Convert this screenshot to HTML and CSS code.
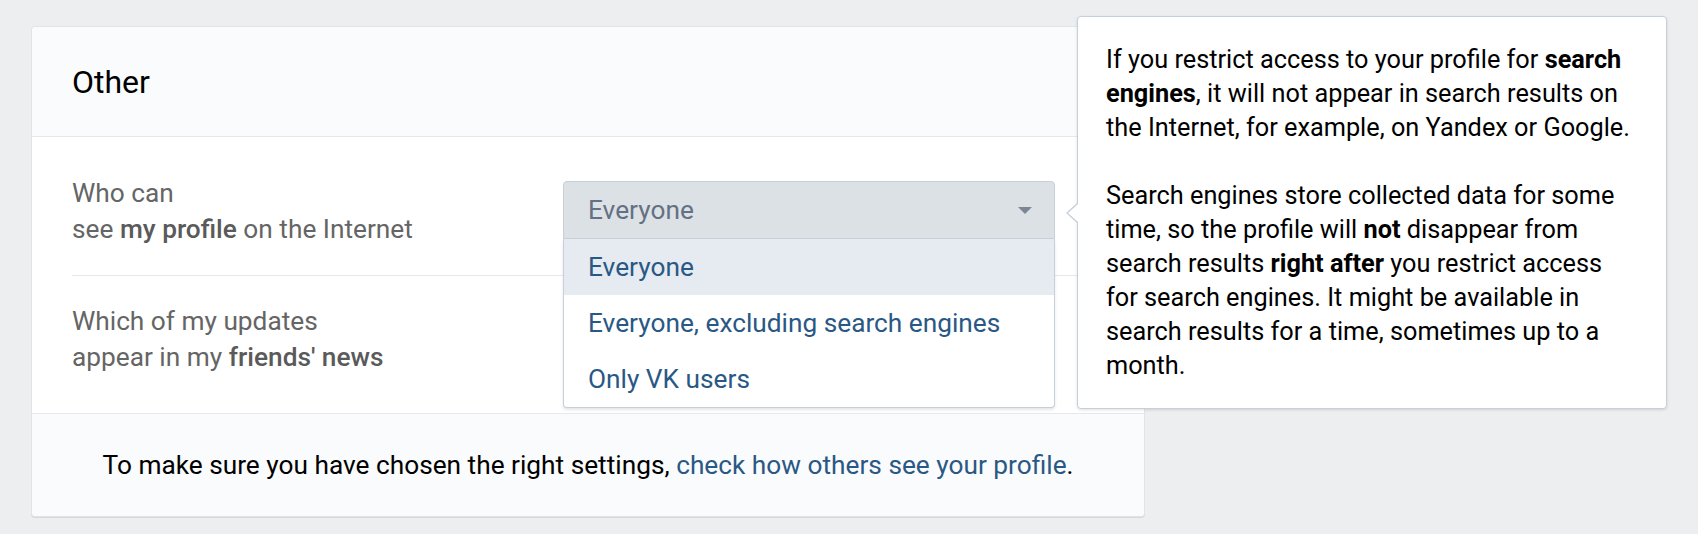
FILE: index.html
```html
<!DOCTYPE html>
<html lang="en">
<head>
<meta charset="utf-8">
<title>Other settings</title>
<link rel="stylesheet" href="styles.css">
</head>
<body>
<div class="page">
  <section class="card">
    <header class="card-header">
      <h2 class="card-title">Other</h2>
    </header>
    <div class="card-body">
      <div class="row">
        <div class="row-label">Who can<br>see <b>my profile</b> on the Internet</div>
        <div class="select is-open">
          <div class="select-head">
            <span class="select-value">Everyone</span>
            <span class="select-arrow"></span>
          </div>
          <ul class="select-list">
            <li class="select-option is-hover">Everyone</li>
            <li class="select-option">Everyone, excluding search engines</li>
            <li class="select-option">Only VK users</li>
          </ul>
        </div>
      </div>
      <div class="row row-sep">
        <div class="row-label">Which of my updates<br>appear in my <b>friends' news</b></div>
      </div>
    </div>
    <footer class="card-footer">
      To make sure you have chosen the right settings, <a class="link" href="#">check how others see your profile</a>.
    </footer>
  </section>

  <div class="tooltip">
    <span class="tooltip-pointer"></span>
    <p>If you restrict access to your profile for <b>search<br>engines</b>, it will not appear in search results on<br>the Internet, for example, on Yandex or Google.</p>
    <p class="tooltip-p2">Search engines store collected data for some<br>time, so the profile will <b>not</b> disappear from<br>search results <b>right after</b> you restrict access<br>for search engines. It might be available in<br>search results for a time, sometimes up to a<br>month.</p>
  </div>
</div>
</body>
</html>
```

FILE: styles.css
```css
* { box-sizing: border-box; }

html, body {
  margin: 0;
  padding: 0;
  background: #edeef0;
  font-family: Roboto, "Liberation Sans", Arial, sans-serif;
  color: #000;
}

.page {
  position: relative;
  width: 1698px;
  height: 534px;
  padding: 26px 0 0 31px;
}

.card {
  width: 1114px;
  background: #fff;
  border: 1px solid #e1e3e6;
  border-radius: 4px;
  box-shadow: 0 1px 0 0 #d7d8db;
  overflow: visible;
}

.card-header {
  height: 110px;
  display: flex;
  align-items: center;
  padding: 0 40px;
  background: #fafbfc;
  border-bottom: 1px solid #e7e8ec;
  border-radius: 4px 4px 0 0;
}

.card-title {
  margin: 0;
  font-size: 32px;
  font-weight: 400;
  line-height: 36px;
  color: #000;
}

.card-body {
  padding: 10px 0 10px;
}

.row {
  display: flex;
  align-items: center;
  margin: 0 40px;
  padding: 28px 0;
}

.row-sep {
  border-top: 1px solid #e7e8ec;
  padding-top: 27px;
}

.row-label {
  width: 491px;
  flex: none;
  font-size: 26.25px;
  line-height: 36px;
  color: #656565;
}

.row-label b {
  font-weight: 500;
  color: #5a5a5a;
}

.select {
  position: relative;
  width: 492px;
  flex: none;
  margin-bottom: 3px;
  font-size: 26.25px;
  line-height: 36px;
  z-index: 2;
}

.select-head {
  position: relative;
  padding: 10px 60px 10px 24px;
  background: #dce1e6;
  border: 1px solid #c5d0db;
  border-radius: 4px 4px 0 0;
  color: #647182;
}

.select-arrow {
  position: absolute;
  right: 22px;
  top: 25px;
  width: 0;
  height: 0;
  border-left: 7.5px solid transparent;
  border-right: 7.5px solid transparent;
  border-top: 7px solid #7b8796;
}

.select-list {
  position: absolute;
  top: 100%;
  left: 0;
  right: 0;
  margin: 0;
  padding: 0;
  list-style: none;
  background: #fff;
  border: 1px solid #c5d0db;
  border-top: 0;
  border-radius: 0 0 4px 4px;
  box-shadow: 0 2px 3px rgba(0, 0, 0, 0.1);
}

.select-option {
  padding: 10px 24px 10.3px;
  color: #2a5885;
}

.select-option.is-hover {
  background: #e5ebf1;
}

.card-footer {
  padding: 33px 20px 33px;
  background: #fafbfc;
  border-top: 1px solid #e7e8ec;
  border-radius: 0 0 4px 4px;
  text-align: center;
  font-size: 26.25px;
  line-height: 36px;
  color: #000;
}

.link {
  color: #2a5885;
  text-decoration: none;
}

.tooltip {
  position: absolute;
  left: 1077px;
  top: 16px;
  width: 590px;
  padding: 26px 20px 25px 28px;
  background: #fff;
  border: 1px solid #c5d0db;
  border-radius: 4px;
  box-shadow: 0 1px 3px rgba(0, 0, 0, 0.12);
  font-size: 25.3px;
  line-height: 34px;
  color: #000;
  white-space: nowrap;
  z-index: 3;
}

.tooltip p {
  margin: 0;
}

.tooltip .tooltip-p2 {
  margin-top: 34px;
}

.tooltip b {
  font-weight: 700;
}

.tooltip-pointer {
  position: absolute;
  left: -12px;
  top: 186px;
  width: 0;
  height: 0;
  border-top: 10.5px solid transparent;
  border-bottom: 10.5px solid transparent;
  border-right: 11px solid #c5d0db;
}

.tooltip-pointer::after {
  content: "";
  position: absolute;
  left: 1.5px;
  top: -9.5px;
  width: 0;
  height: 0;
  border-top: 9.5px solid transparent;
  border-bottom: 9.5px solid transparent;
  border-right: 10px solid #fff;
}
```
